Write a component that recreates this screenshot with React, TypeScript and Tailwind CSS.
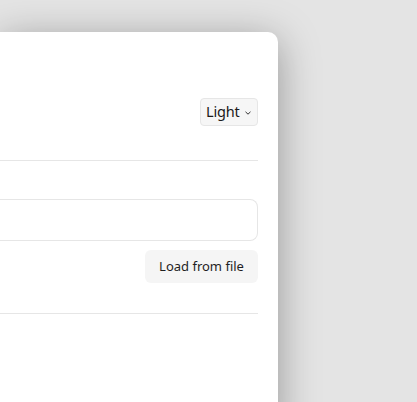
import React from "react";

export default function App() {
  return (
    <div
      className="w-[417px] h-[402px] overflow-hidden bg-[#e4e4e4] pt-[32px]"
      style={{ fontFamily: '"Noto Sans", "Open Sans", sans-serif' }}
    >
      <div className="w-[278px] h-[400px] bg-white rounded-tr-[10px] shadow-[0_8px_40px_rgba(0,0,0,0.35)] pt-[66px] pr-[20px] flex flex-col">
        <div className="flex justify-end">
          <div className="h-[28px] w-[58px] flex items-center justify-between pl-[5px] pr-[6px] border border-[#e6e6e6] bg-[#f6f6f6] rounded-[4px] text-[14.5px] tracking-[-0.2px] text-[#1a1a1a]">
            <span>Light</span>
            <svg width="6" height="4" viewBox="0 0 6 4" fill="none" className="mt-[1px]">
              <path d="M0.5 0.8L3 3.2L5.5 0.8" stroke="#333" strokeWidth="1" />
            </svg>
          </div>
        </div>
        <div className="mt-[34px] h-px bg-[#e6e6e6]" />
        <div className="mt-[38px] h-[42px] border border-[#e6e6e6] rounded-r-[8px] border-l-0 bg-white" />
        <div className="flex justify-end mt-[9px]">
          <button className="h-[33px] w-[113px] bg-[#f5f5f5] rounded-[6px] text-[13px] text-[#1f1f1f]">
            Load from file
          </button>
        </div>
        <div className="mt-[30px] h-px bg-[#e6e6e6]" />
      </div>
    </div>
  );
}
